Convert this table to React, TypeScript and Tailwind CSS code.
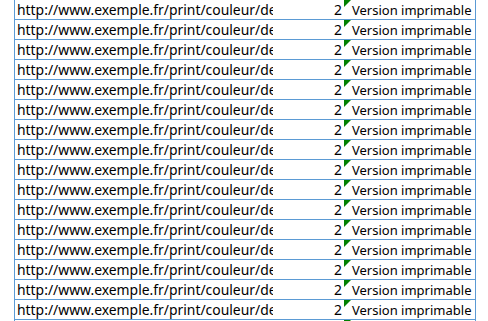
import React from 'react';

const ROWS = Array.from({ length: 17 }, (_, i) => i);

const URL = 'http://www.exemple.fr/print/couleur/detail-article.php';

export default function App() {
  return (
    <div className="h-[321px] w-[488px] overflow-hidden bg-white">
      <div
        className="ml-[14px] w-[462px] border-x border-[#5b9bd5] text-[13.9px] text-black"
        style={{ fontFamily: '"Noto Sans", sans-serif' }}
      >
        {ROWS.map((i) => (
          <div key={i} className="flex h-[20px] border-b border-[#5b9bd5]">
            <div className="w-[258px] shrink-0 overflow-hidden whitespace-nowrap pl-[2px] pt-[1px] leading-[18px]">
              {URL}
            </div>
            <div className="w-[71px] shrink-0 pr-[2px] pt-[1px] text-right leading-[18px]">2</div>
            <div className="relative flex-1 whitespace-nowrap pl-[8px] pt-[1px] text-[13px] leading-[18px]">
              <svg className="absolute left-0 top-0" width="7" height="7" viewBox="0 0 7 7">
                <polygon points="0,0 7,0 0,7" fill="#008000" />
              </svg>
              Version imprimable
            </div>
          </div>
        ))}
      </div>
    </div>
  );
}
